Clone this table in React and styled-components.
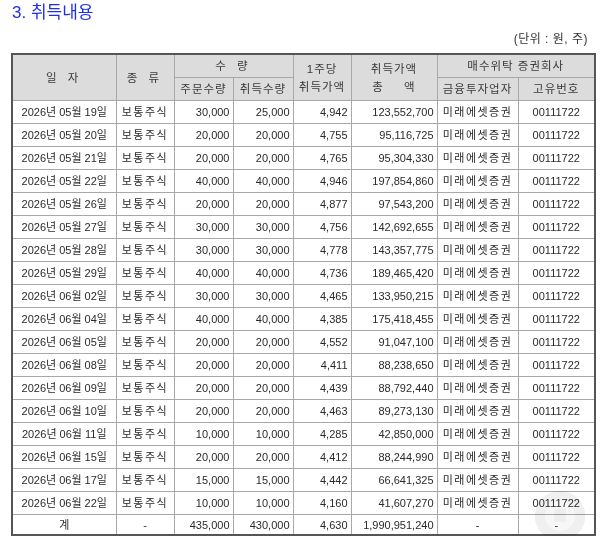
import React from 'react';
import styled, { createGlobalStyle } from 'styled-components';

const GlobalStyle = createGlobalStyle`
    body {
        margin: 0;
        background: #fff;
        font-family: "Liberation Sans", "Noto Sans CJK KR", sans-serif;
    }
`;

// Rows of the acquisition table: date, ordered qty, acquired qty, price per share, total.
const rows = [
    ['2026년 05월 19일', '30,000', '25,000', '4,942', '123,552,700'],
    ['2026년 05월 20일', '20,000', '20,000', '4,755', '95,116,725'],
    ['2026년 05월 21일', '20,000', '20,000', '4,765', '95,304,330'],
    ['2026년 05월 22일', '40,000', '40,000', '4,946', '197,854,860'],
    ['2026년 05월 26일', '20,000', '20,000', '4,877', '97,543,200'],
    ['2026년 05월 27일', '30,000', '30,000', '4,756', '142,692,655'],
    ['2026년 05월 28일', '30,000', '30,000', '4,778', '143,357,775'],
    ['2026년 05월 29일', '40,000', '40,000', '4,736', '189,465,420'],
    ['2026년 06월 02일', '30,000', '30,000', '4,465', '133,950,215'],
    ['2026년 06월 04일', '40,000', '40,000', '4,385', '175,418,455'],
    ['2026년 06월 05일', '20,000', '20,000', '4,552', '91,047,100'],
    ['2026년 06월 08일', '20,000', '20,000', '4,411', '88,238,650'],
    ['2026년 06월 09일', '20,000', '20,000', '4,439', '88,792,440'],
    ['2026년 06월 10일', '20,000', '20,000', '4,463', '89,273,130'],
    ['2026년 06월 11일', '10,000', '10,000', '4,285', '42,850,000'],
    ['2026년 06월 15일', '20,000', '20,000', '4,412', '88,244,990'],
    ['2026년 06월 17일', '15,000', '15,000', '4,442', '66,641,325'],
    ['2026년 06월 22일', '10,000', '10,000', '4,160', '41,607,270'],
];

const colWidths = [104, 58, 59, 60, 58, 86, 81, 77];

const App = () => {
    return (
        <>
            <GlobalStyle />
            <Page>
                <Title>3. 취득내용</Title>
                <Unit>(단위 : 원, 주)</Unit>
                <TableWrap>
                    <Table>
                        <colgroup>
                            {colWidths.map((w, i) => <col key={i} style={{ width: w }} />)}
                        </colgroup>
                        <thead>
                            <tr>
                                <Th rowSpan={2} spaced>일 자</Th>
                                <Th rowSpan={2} spaced>종 류</Th>
                                <Th colSpan={2} spaced>수 량</Th>
                                <Th rowSpan={2}>1주당<br />취득가액</Th>
                                <Th rowSpan={2}>취득가액<br /><Wide>총 액</Wide></Th>
                                <Th colSpan={2}>매수위탁 증권회사</Th>
                            </tr>
                            <tr>
                                <Th>주문수량</Th>
                                <Th>취득수량</Th>
                                <Th>금융투자업자</Th>
                                <Th>고유번호</Th>
                            </tr>
                        </thead>
                        <tbody>
                            {rows.map(r => (
                                <tr key={r[0]}>
                                    <Td>{r[0]}</Td>
                                    <Td ko>보통주식</Td>
                                    <Td num>{r[1]}</Td>
                                    <Td num>{r[2]}</Td>
                                    <Td num>{r[3]}</Td>
                                    <Td num>{r[4]}</Td>
                                    <Td ko>미래에셋증권</Td>
                                    <Td>00111722</Td>
                                </tr>
                            ))}
                            <TotalRow>
                                <Td>계</Td>
                                <Td>-</Td>
                                <Td num>435,000</Td>
                                <Td num>430,000</Td>
                                <Td num>4,630</Td>
                                <Td num>1,990,951,240</Td>
                                <Td>-</Td>
                                <Td>-</Td>
                            </TotalRow>
                        </tbody>
                    </Table>
                    <Stamp viewBox="0 0 60 60" aria-hidden="true">
                        <circle cx="30" cy="30" r="27" fill="#e6e6e6" />
                        <circle cx="30" cy="30" r="16" fill="#f2f2f2" />
                        <rect x="24" y="22" width="12" height="14" fill="#e2e2e2" />
                    </Stamp>
                </TableWrap>
            </Page>
        </>
    );
}

const Page = styled.div`
    width: 600px;
    padding: 3px 6px 0 11px;
    box-sizing: border-box;
`;

const Title = styled.h2`
    margin: 0 0 0 1px;
    font-size: 17px;
    font-weight: normal;
    line-height: 20px;
    color: #1f2ee6;
`;

const Unit = styled.div`
    margin-top: 7px;
    padding-right: 6px;
    text-align: right;
    font-size: 12px;
    line-height: 18px;
    letter-spacing: 0.5px;
    color: #333;
`;

const TableWrap = styled.div`
    position: relative;
    margin-top: 5px;
    width: 583px;
`;

const Table = styled.table`
    width: 583px;
    table-layout: fixed;
    border-collapse: collapse;
    border: 2px solid #555;
    font-size: 11px;
    color: #2a2a2a;
`;

const Th = styled.th`
    height: 22px;
    padding: 0;
    border: 1px solid #a8a8a8;
    background: #dcdcdc;
    font-weight: normal;
    font-size: 11.5px;
    line-height: 18px;
    color: #3a3a3a;
    text-align: center;
    letter-spacing: ${props => props.spaced ? '4px' : '1px'};
`;

const Wide = styled.span`
    word-spacing: 16px;
`;

const Td = styled.td`
    height: 22px;
    padding: 0 ${props => props.num ? '3px' : '0'} 0 0;
    border: 1px solid #a8a8a8;
    text-align: ${props => props.num ? 'right' : 'center'};
    letter-spacing: ${props => props.ko ? '1.5px' : '0'};
    white-space: nowrap;
    line-height: 14px;
`;

const TotalRow = styled.tr`
    td { height: 19px; }
`;

const Stamp = styled.svg`
    position: absolute;
    right: 6px;
    bottom: -8px;
    width: 56px;
    height: 56px;
    opacity: 0.6;
    pointer-events: none;
    mix-blend-mode: multiply;
`;

export default App;
